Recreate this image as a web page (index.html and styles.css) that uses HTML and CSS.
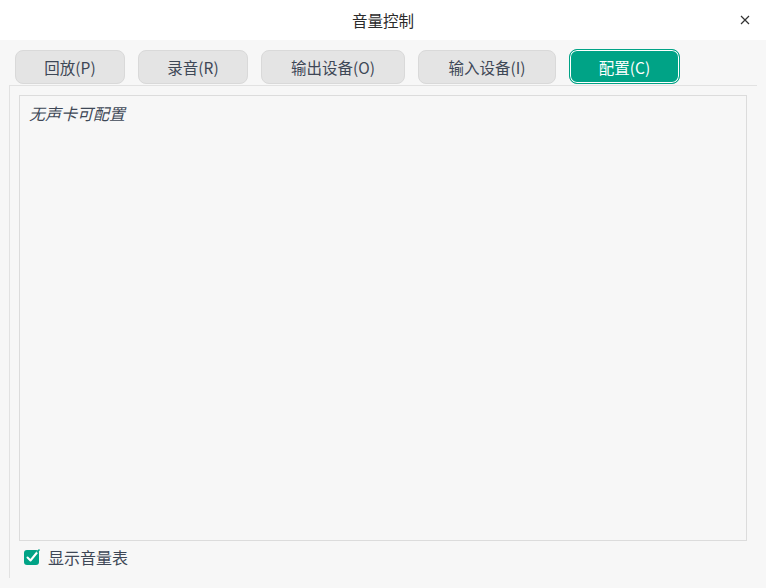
FILE: index.html
```html
<!DOCTYPE html>
<html lang="zh">
<head>
<meta charset="utf-8">
<link rel="stylesheet" href="styles.css">
</head>
<body>
<div class="window">
  <div class="titlebar">
    <span class="title">音量控制</span>
    <span class="close">
      <svg width="10" height="10" viewBox="0 0 10 10"><path d="M1 1L9 9M9 1L1 9" stroke="#333" stroke-width="1.2" fill="none"/></svg>
    </span>
  </div>
  <div class="content">
    <div class="tabs">
      <div class="tab t1">回放(P)</div>
      <div class="tab t2">录音(R)</div>
      <div class="tab t3">输出设备(O)</div>
      <div class="tab t4">输入设备(I)</div>
      <div class="tab t5 active">配置(C)</div>
    </div>
    <div class="panel">
      <div class="box">
        <div class="empty">无声卡可配置</div>
      </div>
      <label class="check">
        <span class="cb">
          <svg width="16" height="16" viewBox="0 0 16 16"><rect x="0" y="1" width="15" height="15" rx="3" fill="#00a386"/><path d="M3.5 8.5L6.5 11.5L13 3.5" stroke="#fff" stroke-width="2" fill="none" stroke-linecap="round" stroke-linejoin="round"/><path d="M13 3.5L15.5 0.5" stroke="#00a386" stroke-width="1.5"/></svg>
        </span>
        <span class="label">显示音量表</span>
      </label>
    </div>
  </div>
</div>
</body>
</html>
```
FILE: styles.css
```css
html, body {
  margin: 0;
  padding: 0;
}
body {
  width: 766px;
  height: 588px;
  overflow: hidden;
  background: #f7f7f7;
  font-family: "Noto Sans CJK SC", "Noto Sans", sans-serif;
  color: #333;
}
.window {
  display: flex;
  flex-direction: column;
  height: 588px;
}
.titlebar {
  height: 40px;
  background: #ffffff;
  display: flex;
  align-items: center;
  justify-content: center;
  position: relative;
  flex: none;
}
.title {
  font-size: 15.5px;
  color: #2b2b2b;
}
.close {
  position: absolute;
  right: 16px;
  top: 15px;
  width: 10px;
  height: 10px;
  display: flex;
}
.content {
  flex: 1;
  display: flex;
  flex-direction: column;
  padding: 10px 9px 10px 9px;
}
.tabs {
  display: flex;
  gap: 13px;
  padding-left: 6px;
  height: 34px;
}
.tab {
  box-sizing: border-box;
  height: 34px;
  background: #e4e4e4;
  border: 1px solid #d9d9d9;
  border-radius: 8px;
  display: flex;
  align-items: center;
  justify-content: center;
  font-size: 15.5px;
  color: #3e4756;
}
.t1 { width: 110px; }
.t2 { width: 110px; }
.t3 { width: 144px; }
.t4 { width: 138px; }
.t5 { width: 111px; }
.tab.active {
  background: #00a386;
  border: 1px solid #00a386;
  box-shadow: inset 0 0 0 1px #ffffff;
  color: #ffffff;
  margin-top: -1px;
  height: 35px;
}
.panel {
  flex: 1;
  margin-top: 1px;
  border-top: 1px solid #e2e2e2;
  border-left: 1px solid #e2e2e2;
  display: flex;
  flex-direction: column;
  padding: 9px 10px 0 9px;
}
.box {
  height: 446px;
  border: 1px solid #dcdcdc;
  background: #f7f7f7;
  padding: 5px 9px;
  box-sizing: border-box;
}
.empty {
  font-style: italic;
  font-size: 16px;
  color: #3e4756;
}
.check {
  display: flex;
  align-items: center;
  margin-top: 7px;
  padding-left: 5px;
  height: 18px;
}
.cb {
  width: 16px;
  height: 16px;
  display: flex;
}
.label {
  margin-left: 8px;
  font-size: 16px;
  color: #3e4756;
}
```
